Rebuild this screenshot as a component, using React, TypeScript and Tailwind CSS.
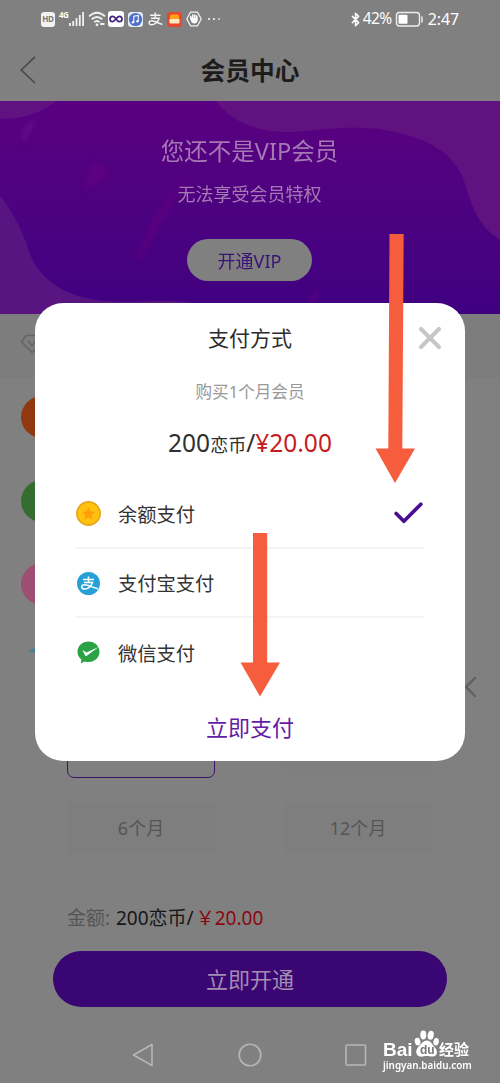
import { Bluetooth, Check, X } from "lucide-react";


const benefits = ["bg-[#923811]", "bg-[#356c2f]", "bg-[#9c4f73]", "bg-[#3f7f9c]"];

function StatusBar() {
    return (
        <div className="flex h-[38px] items-center justify-between pl-[41px] pr-[41px] text-white">
            <div className="flex items-center">
                <div className="flex h-[15px] w-[14px] items-center justify-center rounded-[3px] bg-[#f2f2f2] text-[8px] font-bold leading-none tracking-[-0.3px] text-[#777]">HD</div>
                <span className="-mt-[8px] ml-[4px] w-[10px] text-[8px] font-bold leading-none tracking-[-0.5px]">4G</span>
                <svg className="h-4 w-4" viewBox="0 0 16 16" fill="#f0f0f0">
                    <rect x="0" y="12" width="1.8" height="3" />
                    <rect x="3.3" y="10" width="1.8" height="5" />
                    <rect x="6.6" y="7" width="1.8" height="8" />
                    <rect x="9.9" y="4" width="1.8" height="11" />
                    <rect x="13.2" y="1" width="1.8" height="14" />
                </svg>
                <svg className="ml-[3px] h-4 w-[18px]" viewBox="0 0 18 16" fill="none" stroke="#f0f0f0" strokeWidth="1.8">
                    <path d="M1 5.3Q9-1.8 17 5.3M3.7 8.3Q9 3.7 14.3 8.3M6.2 11.2Q9 8.7 11.8 11.2" />
                    <circle cx="9" cy="13.8" r="1.4" fill="#f0f0f0" stroke="none" />
                    <path d="M12.2 13h4.3" strokeWidth="2" />
                </svg>
                <svg className="ml-[2px] h-4 w-4" viewBox="0 0 16 16">
                    <rect width="16" height="16" rx="3" fill="#fff" />
                    <path d="M8 8C6.8 6 5.9 5.3 4.7 5.3a2.7 2.7 0 0 0 0 5.4C6.5 10.7 9 5.3 11.3 5.3a2.7 2.7 0 0 1 0 5.4C10.1 10.7 9.2 10 8 8Z" fill="none" stroke="#44237f" strokeWidth="1.7" />
                </svg>
                <svg className="ml-[4px] h-[15px] w-[15px]" viewBox="0 0 15 15">
                    <rect width="15" height="15" rx="3.5" fill="#e8ecfa" />
                    <circle cx="7.5" cy="7.5" r="6.6" fill="#4d6fc9" />
                    <path d="M5.8 10V4.3l4.5-.9V9" fill="none" stroke="#fff" strokeWidth="1.1" />
                    <circle cx="5" cy="10.2" r="1.2" fill="#fff" />
                    <circle cx="9.5" cy="9.3" r="1.2" fill="#fff" />
                </svg>
                <svg className="ml-[5px] h-4 w-[15px]" viewBox="0 0 15 16" fill="none" stroke="#f4f4f4" strokeWidth="1.4">
                    <path d="M2 4.3h10.500M7.200 1.5v5.500M3 7.200h8.200C10 11 6.600 13.800 3.600 13.800c-3.400 0-3.300-4 .2-4 3.200 0 6.400 2.500 10.700 3.600" />
                </svg>
                <svg className="ml-[4px] h-[15px] w-[15px]" viewBox="0 0 15 15">
                    <rect width="15" height="15" rx="3" fill="#e5482f" />
                    <path d="M3 4q0-1.5 1.5-1.5h6Q12 2.5 12 4v3H3Z" fill="#ffa21a" />
                    <path d="M2.500 7h10v3.500q0 1-1 1h-8q-1 0-1-1Z" fill="#ffe9c4" />
                </svg>
                <svg className="ml-[4px] h-4 w-4" viewBox="0 0 16 16">
                    <path d="M4.500 1.200h7L15.200 8l-3.700 6.800h-7L.8 8Z" fill="none" stroke="#f2f2f2" strokeWidth="1.2" />
                    <path d="M4.800 7.800V5.500M6.800 7V3.900M8.800 7V3.900M10.800 7.500V5" stroke="#fff" strokeWidth="1.5" strokeLinecap="round" />
                    <path d="M4.100 7h7.500v2.200q0 3-3.300 3.300-2.300 0-3.200-2Z" fill="#fff" />
                </svg>
                <div className="ml-[6px] flex gap-[3px]">
                    <i className="size-[2px] rounded-full bg-white" />
                    <i className="size-[2px] rounded-full bg-white" />
                    <i className="size-[2px] rounded-full bg-white/70" />
                </div>
            </div>
            <div className="flex items-center text-[15.5px] leading-none">
                <Bluetooth className="mr-[-1px] h-[17px] w-[15px]" strokeWidth={2.4} />
                <span className="ml-[1px] w-[32px] tracking-[-0.5px]">42%</span>
                <svg className="h-4 w-7" viewBox="0 0 28 16" fill="none">
                    <rect x="1.5" y="1.5" width="23" height="13.5" rx="3" stroke="#ededed" strokeWidth="1.4" />
                    <rect x="3.5" y="3.8" width="9" height="9" rx="1" fill="#fff" />
                    <path d="M27 5.500v6" stroke="#ededed" strokeWidth="1.5" />
                </svg>
                <span className="ml-[5px] text-[16px] tracking-[-0.1px]">2:47</span>
            </div>
        </div>
    );
}

function Banner() {
    return (
        <div className="relative h-[213px] overflow-hidden bg-linear-to-b from-[#5a0080] to-[#3f0080]">
            <svg className="absolute inset-0" width="500" height="213" viewBox="0 0 500 213">
                <g fill="#601280">
                    <path d="M0 0H56Q34 18 0 18Z" />
                    <path d="M216 0C232 22 260 32 293 31C330 28 350 25 378 28C430 35 457 55 465 83C475 117 484 128 500 139V0Z" />
                    <path d="M0 95C15 113 23 132 30 153C39 177 65 197 105 200C150 203 180 195 210 207V213H0Z" fill="#581480" />
                </g>
                {/* soft light streaks */}
                <g className="blur-[2px]" fill="#74007e">
                    <path d="M194 66L170 110L141 158L134 158L155 112Z" opacity="0.3" />
                    <path d="M92 62Q112 64 106 77L82 92Z" opacity="0.35" />
                    <path d="M22 38Q22 22 37 18L25 42Z" fill="#7b2090" opacity="0.35" />
                    <path d="M318 184L302 213H309L319 193Z" opacity="0.35" />
                </g>
            </svg>
            <div className="relative flex flex-col items-center pr-[1px] text-[#a678b4]">
                <p className="mt-[35px] text-[23.5px] leading-[30px]">您还不是VIP会员</p>
                <p className="mt-[16px] text-[18px] leading-6">无法享受会员特权</p>
                <button className="mt-[33px] h-[42px] w-[125px] rounded-full bg-[#808080] pt-[2px] text-[18px] leading-none text-[#3a1277]">开通VIP</button>
            </div>
        </div>
    );
}

function Page() {
    return (
        <div className="flex h-[1083px] flex-col bg-[#808080]">
            <StatusBar />
            <header className="flex h-[63px] shrink-0 items-center px-5">
                <svg className="mr-auto h-7 w-[18px]" viewBox="0 0 18 28" fill="none" stroke="#484848" strokeWidth="1.6">
                    <path d="M15 .8L1.200 14L15 27" />
                </svg>
                <h1 className="pt-[3px] text-[24.7px] font-bold leading-none text-[#1c1c1c]">会员中心</h1>
                <div className="ml-auto w-[18px]" />
            </header>
            <Banner />
            <div className="h-[64px] shrink-0 bg-[#7d7d7d] pl-5 pt-5">
                <svg className="h-[20px] w-[24px]" viewBox="0 0 24 20" fill="none" stroke="#656565" strokeWidth="1.7" strokeLinejoin="round">
                    <path d="M6 1.500h12l5 6.500-11 10.500L1.500 8ZM8 7l4 4.500L16 7" />
                </svg>
            </div>
            <div className="flex h-[274px] shrink-0 flex-col gap-[41.5px] overflow-hidden pl-[21px] pt-[18px]">
                {benefits.map((color) => (
                    <div key={color} className={`size-[42px] shrink-0 rounded-full ${color}`} />
                ))}
            </div>
            <div className="flex h-[75px] shrink-0 justify-end pr-[23px] pt-[25px]">
                <svg className="h-5 w-3" viewBox="0 0 12 20" fill="none" stroke="#606060" strokeWidth="2.4" strokeLinecap="round">
                    <path d="M10 1L1 10l9 9" />
                </svg>
            </div>
            <div className="ml-[67px] grid grid-cols-[148px_148px] gap-x-[69px] gap-y-[25px] text-center text-[18px] leading-[50px] text-[#555]">
                <div className="h-[51px] rounded-[7px] border-[1.5px] border-[#3c1268]" />
                <div className="h-[51px] bg-[#7f7f7f]" />
                <div className="h-[50px] bg-[#7e7e7e]">6个月</div>
                <div className="h-[50px] bg-[#7e7e7e]">12个月</div>
            </div>
            <div className="mt-[53px] flex h-6 shrink-0 items-center pl-[67px] text-[19px] leading-6">
                <span className="w-[49px] text-[#555]">金额:</span>
                <span className="text-[#171717]">200恋币/</span>
                <span className="ml-[2px] text-[#8b090e]">￥20.00</span>
            </div>
            <button className="mx-auto mt-[21px] h-[56px] w-[394px] shrink-0 rounded-full bg-[#3a0674] text-[22px] leading-none text-[#a28caf]">立即开通</button>
            <nav className="mt-[32px] flex h-[32px] items-center pl-[131px] text-[#b6b6b6]">
                <svg className="h-6 w-[23px]" viewBox="0 0 23 24" fill="none" stroke="currentColor" strokeWidth="1.6">
                    <path d="M21 1.500v21L2.500 12Z" strokeLinejoin="round" />
                </svg>
                <svg className="ml-[84px] size-6" viewBox="0 0 24 24" fill="none" stroke="currentColor" strokeWidth="1.6">
                    <circle cx="12" cy="12" r="10.8" />
                </svg>
                <svg className="ml-[83px] size-[22px]" viewBox="0 0 22 22" fill="none" stroke="currentColor" strokeWidth="1.6">
                    <rect x="1" y="1" width="19.5" height="20" rx="1" />
                </svg>
            </nav>
        </div>
    );
}

interface MethodProps {
    label: string;
    icon: React.ReactNode;
    selected?: boolean;
}

function Method({ label, icon, selected }: MethodProps) {
    return (
        <li className="flex h-[69.5px] items-center border-b-2 border-[#f3f3f3] pt-[2px] text-[19.3px] text-[#333] last:border-transparent">
            <span className="flex w-[42px]">{icon}</span>
            <span className="pt-[3px]">{label}</span>
            {selected && <Check className="ml-auto mr-[-3px] h-[37px] w-[37px] text-[#4b0d91]" strokeWidth={2.4} />}
        </li>
    );
}

function PayDialog() {
    return (
        <div role="dialog" className="absolute left-[35px] top-[303px] flex h-[458px] w-[430px] flex-col items-center rounded-[28px] bg-white">
            <X className="absolute right-[17px] top-[17px] size-9 text-[#c6c6c6]" strokeWidth={2.7} />
            <h2 className="mt-[21px] text-[21px] leading-7 text-[#2c2c2c]">支付方式</h2>
            <p className="mt-[28px] text-[16.6px] leading-6 text-[#999]">购买1个月会员</p>
            <p className="mt-[23px] flex items-baseline text-[24.5px] leading-8 text-[#303030]">
                200<span className="text-[18px]">恋币</span>/<span className="text-[#c51c1e]">¥20.00</span>
            </p>
            <ul className="mt-[18px] w-[348px]">
                <Method
                    label="余额支付"
                    selected
                    icon={
                        <svg className="size-[25px]" viewBox="0 0 25 25">
                            <circle cx="12.5" cy="12.5" r="11.6" fill="#ffc20e" stroke="#eba51c" strokeWidth="1.7" />
                            <path d="M12.500 6l2 4.300 4.700.6-3.500 3.200.9 4.700-4.100-2.300-4.100 2.300.9-4.700-3.500-3.200 4.700-.6Z" fill="#ff9f0a" />
                        </svg>
                    }
                />
                <Method
                    label="支付宝支付"
                    icon={
                        <svg className="ml-px size-[23px]" viewBox="0 0 23 23" fill="none" stroke="#fff" strokeWidth="1.5">
                            <circle cx="11.5" cy="11.5" r="11.5" fill="#27a0d6" stroke="none" />
                            <path d="M6 7.500h11M11.500 4.500v5.800M7 10.500h8.500c-1.300 3.500-4.500 6.500-8 6.500-3.800 0-3.600-4.200 0-4.200 3.500 0 8 2.700 13.500 4" />
                        </svg>
                    }
                />
                <Method
                    label="微信支付"
                    icon={
                        <svg className="ml-px size-[23px]" viewBox="0 0 23 23">
                            <path d="M11.500.5C17.800.5 22.500 5 22.500 10.800S17.800 21 11.500 21q-2.200 0-4-.6L4 22.500l.3-4Q.5 15.500.5 10.800C.5 5 5.200.5 11.500.5Z" fill="#2ba245" />
                            <path d="M5.500 9l4 2.400L22 5.800 9.800 14.800q-1 .7-1.700-.3Z" fill="#fff" />
                        </svg>
                    }
                />
            </ul>
            <button className="mt-[23px] text-[22px] leading-8 text-[#6420a5]">立即支付</button>
        </div>
    );
}

function Watermark() {
    return (
        <div className="absolute left-[383px] top-[1029px] w-[92px] text-white">
            <div className="flex h-[29px] items-end">
                <span className="w-[30px] font-['Liberation_Sans',sans-serif] text-[19px] font-bold leading-[17px]">Bai</span>
                <div className="relative h-[29px] w-[26px]">
                    <svg className="absolute inset-0" width="26" height="29" viewBox="0 0 27 29" fill="#fff">
                        <ellipse cx="4.8" cy="12.5" rx="2.9" ry="4.1" transform="rotate(-10 4.8 12.5)" />
                        <ellipse cx="10.7" cy="5.7" rx="3.1" ry="4.6" />
                        <ellipse cx="18.4" cy="5.9" rx="3.1" ry="4.6" transform="rotate(10 18.4 5.9)" />
                        <ellipse cx="24" cy="12.7" rx="2.8" ry="4" transform="rotate(12 24 12.7)" />
                        <path d="M14.500 11.500c4 0 5.200 4 8 6.800 4 4 2.500 9.700-2 9.700-2.500 0-4-.5-6.200-.5s-3.700.7-6 .7c-5 0-6.600-5.700-3-9.700 3-2.800 5-7 9.200-7Z" />
                    </svg>
                    <span className="absolute left-[7px] top-[16px] font-['Liberation_Sans',sans-serif] text-[12px] font-bold leading-[10px] text-[#777]">du</span>
                </div>
                <span className="pb-[1px] text-[15px] font-bold leading-[15px]">经验</span>
            </div>
            <p className="mt-[2px] whitespace-nowrap text-[9.9px] font-semibold leading-[11px]">jingyan.baidu.com</p>
        </div>
    );
}

export default function App() {
    return (
        <div className="relative h-[1083px] w-[500px] overflow-hidden font-['Noto_Sans','Noto_Sans_CJK_SC',sans-serif]">
            <Page />
            <PayDialog />
            {/* pointer arrows, drawn over the dialog */}
            <svg className="pointer-events-none absolute left-0 top-0" width="500" height="1083" viewBox="0 0 500 1083" fill="#f65d3c">
                <path d="M389.500 234H403.700L402.300 448.500H415L395 483L375.500 448.500H388.300Z" />
                <path d="M253 533H267.200V662.500H280L260 696.500L240.500 662.500H253Z" />
            </svg>
            <Watermark />
        </div>
    );
}
